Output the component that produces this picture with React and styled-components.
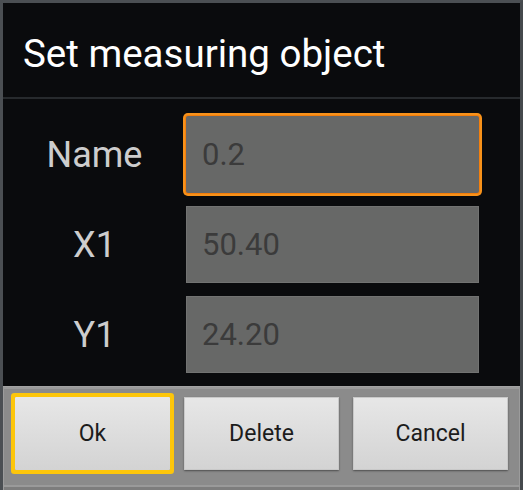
import React from "react";
import styled, { createGlobalStyle } from "styled-components";

const GlobalStyle = createGlobalStyle`
  html, body {
    margin: 0;
    padding: 0;
    background: #0a0b0d;
  }
  body {
    font-family: Roboto, "Noto Sans", "Liberation Sans", sans-serif;
  }
  * { box-sizing: border-box; }
`;

const Dialog = styled.div`
  width: 523px;
  height: 490px;
  display: flex;
  flex-direction: column;
  background: #0a0b0d;
  border-top: 3px solid #4b4f53;
  border-left: 3px solid #4b4f53;
  border-right: 3px solid #45494d;
  overflow: hidden;
`;

const Title = styled.h1`
  margin: 0;
  height: 94px;
  padding: 6px 0 0 20px;
  display: flex;
  align-items: center;
  font-size: 38.5px;
  font-weight: 400;
  color: #ffffff;
`;

const Divider = styled.div`
  height: 2px;
  background: #272a2d;
`;

const Form = styled.div`
  flex: 1;
  display: grid;
  grid-template-columns: 183px 293px;
  grid-auto-rows: 77px;
  row-gap: 13px;
  padding-top: 17px;
  align-content: start;
`;

const Label = styled.div`
  display: flex;
  align-items: center;
  justify-content: center;
  font-size: 36px;
  color: #cdcdcd;
  padding: 0;
`;

const Field = styled.div`
  display: flex;
  align-items: center;
  padding-left: 16px;
  background: #676867;
  font-size: 31px;
  color: #3b3b3b;
  border-radius: ${(p) => (p.$focused ? "2px" : "0")};
  box-shadow: ${(p) =>
    p.$focused
      ? "0 0 0 1px #f47f0c, 0 0 0 3px #f8921a"
      : "inset 0 0 0 1px #727372"};
`;

const ButtonBar = styled.div`
  height: 104px;
  margin: 0 -3px;
  display: flex;
  gap: 14px;
  padding: 10px 15px 0 15px;
  background: #8b8b8b;
  border-top: 1px solid #a3a3a3;
  box-shadow: inset 3px 0 0 #767676, inset -3px 0 0 #767676,
    inset 0 2px 0 #9a9a9a, inset 4px 0 0 #9c9c9c, inset -4px 0 0 #9c9c9c,
    inset 0 -3px 0 #7d7d7d, inset 0 -5px 0 #9a9a9a;
`;

const Button = styled.button`
  flex: 1;
  height: 73px;
  border: none;
  border-radius: 1px;
  background: linear-gradient(#e7e7e7, #d3d3d3);
  font-family: Roboto, "Noto Sans", "Liberation Sans", sans-serif;
  font-size: 23px;
  color: #1c1c1c;
  padding: 0;
  box-shadow: ${(p) =>
    p.$focused
      ? "0 0 0 4px #fdc60a"
      : "0 1px 2px rgba(0,0,0,0.45), inset 0 0 0 1px #c9c9c9"};
  cursor: pointer;
`;

const rows = [
  { label: "Name", value: "0.2", focused: true },
  { label: "X1", value: "50.40" },
  { label: "Y1", value: "24.20" },
];

export default function App() {
  return (
    <>
      <GlobalStyle />
      <Dialog>
        <Title>Set measuring object</Title>
        <Divider />
        <Form>
          {rows.map((r) => (
            <React.Fragment key={r.label}>
              <Label>{r.label}</Label>
              <Field $focused={r.focused}>{r.value}</Field>
            </React.Fragment>
          ))}
        </Form>
        <ButtonBar>
          <Button $focused>Ok</Button>
          <Button>Delete</Button>
          <Button>Cancel</Button>
        </ButtonBar>
      </Dialog>
    </>
  );
}
